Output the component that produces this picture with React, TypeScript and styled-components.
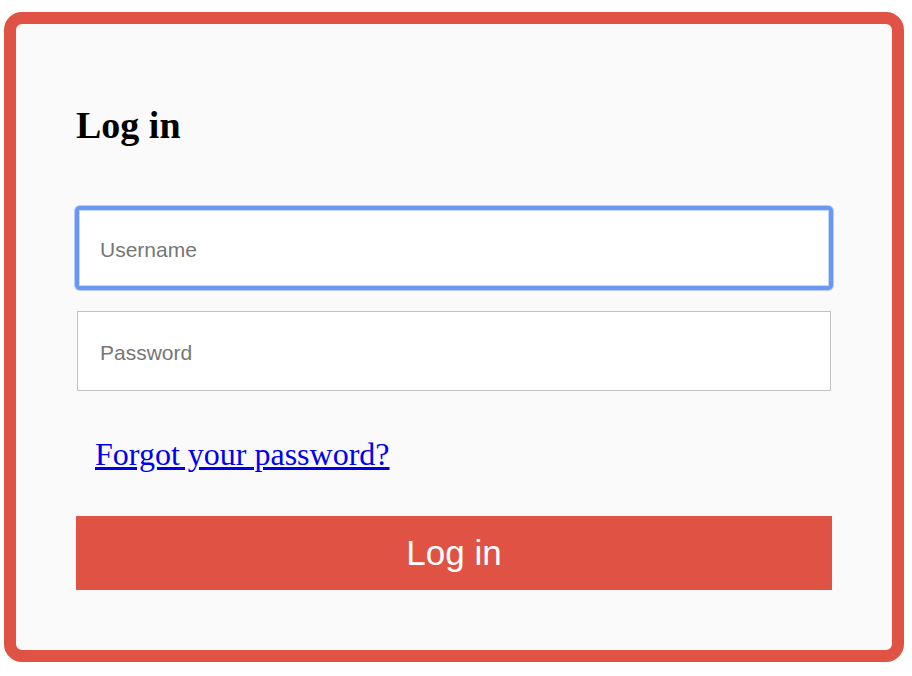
import styled, { createGlobalStyle, css } from "styled-components";

const GlobalStyle = createGlobalStyle`
  html,
  body {
    margin: 0;
    padding: 0;
    background: #ffffff;
  }
`;

const Page = styled.div`
  padding: 12px 8px 14px 4px;
`;

const Card = styled.form`
  box-sizing: border-box;
  width: 900px;
  height: 650px;
  border: 12px solid #e05243;
  border-radius: 18px;
  background: #fafafa;
  padding: 80px 60px 0;
  display: flex;
  flex-direction: column;

  & > * {
    flex-shrink: 0;
  }
`;

const Title = styled.h1`
  margin: 0 0 62px;
  font-family: "Liberation Serif", "Times New Roman", serif;
  font-size: 38px;
  font-weight: 700;
  line-height: 42px;
  color: #000000;
`;

const Field = styled.input<{ $focused?: boolean; $gap: number }>`
  box-sizing: border-box;
  width: calc(100% - 2px);
  height: 80px;
  margin: 0 1px ${(p) => p.$gap}px;
  padding: 3px 22px 0;
  border: 1px solid #c1c1c1;
  border-radius: 0;
  background: #ffffff;
  font-family: "Liberation Sans", Arial, sans-serif;
  font-size: 21px;
  color: #222222;
  outline: none;

  &::placeholder {
    color: #767676;
  }

  ${(p) =>
    p.$focused &&
    css`
      border: 2px solid #6a97ef;
      border-radius: 3px;
      box-shadow: 0 0 0 2px #6a97ef, 0 0 0 3px #b7cdf7,
        inset 0 0 0 1px #c6d8fa;
      padding: 3px 21px 0;
    `}
`;

const LinkRow = styled.div`
  margin: 45px 0 0;
  height: 80px;
  padding: 0 19px;
  font-family: "Liberation Serif", "Times New Roman", serif;
  font-size: 32px;
  line-height: 36px;
`;

const ForgotLink = styled.a`
  color: #0000ee;
  text-decoration: underline;
`;

const SubmitButton = styled.button`
  box-sizing: border-box;
  width: 100%;
  height: 74px;
  border: none;
  border-radius: 0;
  background: #e05243;
  color: #ffffff;
  font-family: "Liberation Sans", Arial, sans-serif;
  font-size: 35px;
  cursor: pointer;
`;

export default function App() {
  return (
    <Page>
      <GlobalStyle />
      <Card onSubmit={(e) => e.preventDefault()}>
        <Title>Log in</Title>
        <Field type="text" placeholder="Username" $focused $gap={23} />
        <Field type="password" placeholder="Password" $gap={0} />
        <LinkRow>
          <ForgotLink href="#">Forgot your password?</ForgotLink>
        </LinkRow>
        <SubmitButton type="submit">Log in</SubmitButton>
      </Card>
    </Page>
  );
}
